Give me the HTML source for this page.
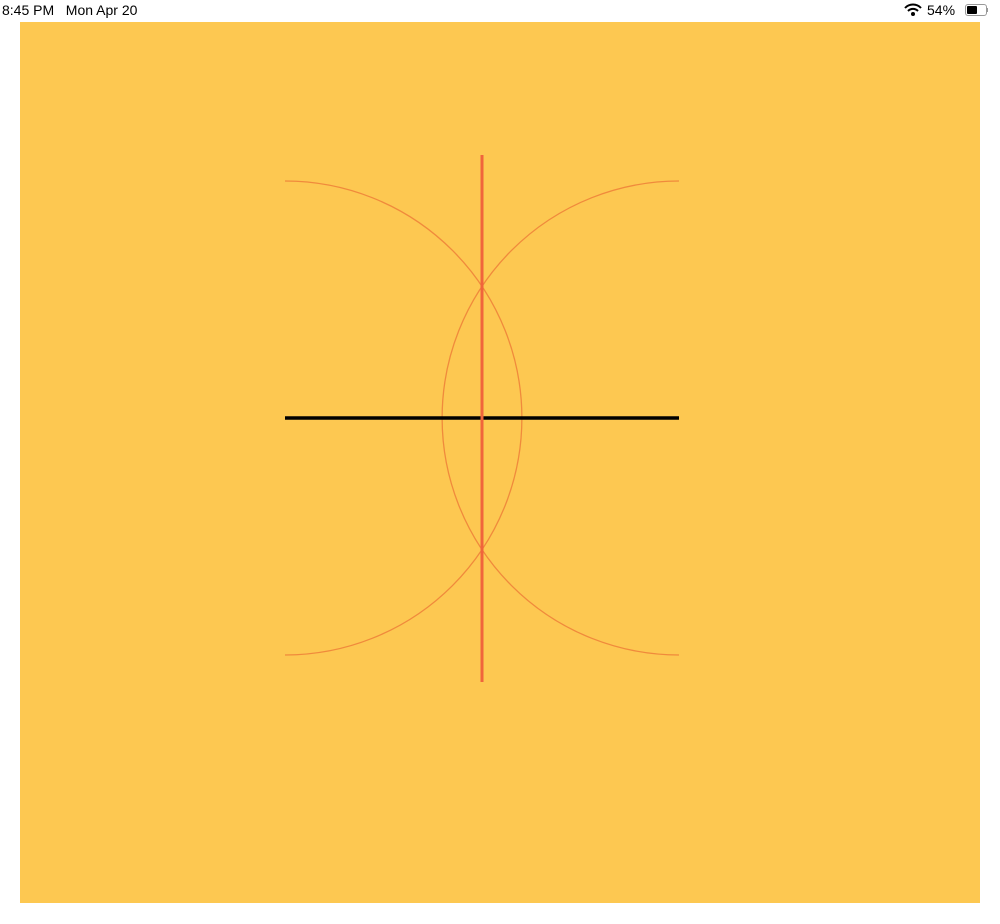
<!DOCTYPE html>
<html><head><style>
body{margin:0;width:1000px;height:924px;background:#fff;position:relative;overflow:hidden;font-family:"Liberation Sans",sans-serif}
.t{position:absolute;top:2px;font-size:14px;color:#000}
</style></head><body>
<div class="t" style="left:2px">8:45 PM&nbsp;&nbsp;&nbsp;Mon Apr 20</div>
<svg style="position:absolute;left:903px;top:3px" width="20" height="14" viewBox="0 0 20 14"><path d="M2 5 A11 11 0 0 1 18 5" stroke="#000" stroke-width="2" fill="none"/><path d="M5 8 A7 7 0 0 1 15 8" stroke="#000" stroke-width="2" fill="none"/><circle cx="10" cy="11" r="2"/></svg>
<div class="t" style="left:927px">54%</div>
<div style="position:absolute;left:965px;top:4px;width:20px;height:10px;border:1px solid #999;border-radius:3px"><div style="margin:1px;width:10px;height:8px;background:#000;border-radius:1px"></div></div>
<div style="position:absolute;left:986px;top:8px;width:2px;height:4px;background:#999"></div>
<svg style="position:absolute;left:0;top:0" width="1000" height="924">
<rect x="20" y="22" width="960" height="881" fill="#fdc851"/>
<path d="M285 181 A237 237 0 0 1 285 655" stroke="#f08a3c" stroke-width="1.3" fill="none"/>
<path d="M679 181 A237 237 0 0 0 679 655" stroke="#f08a3c" stroke-width="1.3" fill="none"/>
<line x1="285" y1="418" x2="679" y2="418" stroke="#000" stroke-width="3.5"/>
<line x1="482" y1="155" x2="482" y2="682" stroke="#f0643c" stroke-width="3"/>
</svg>
</body></html>
